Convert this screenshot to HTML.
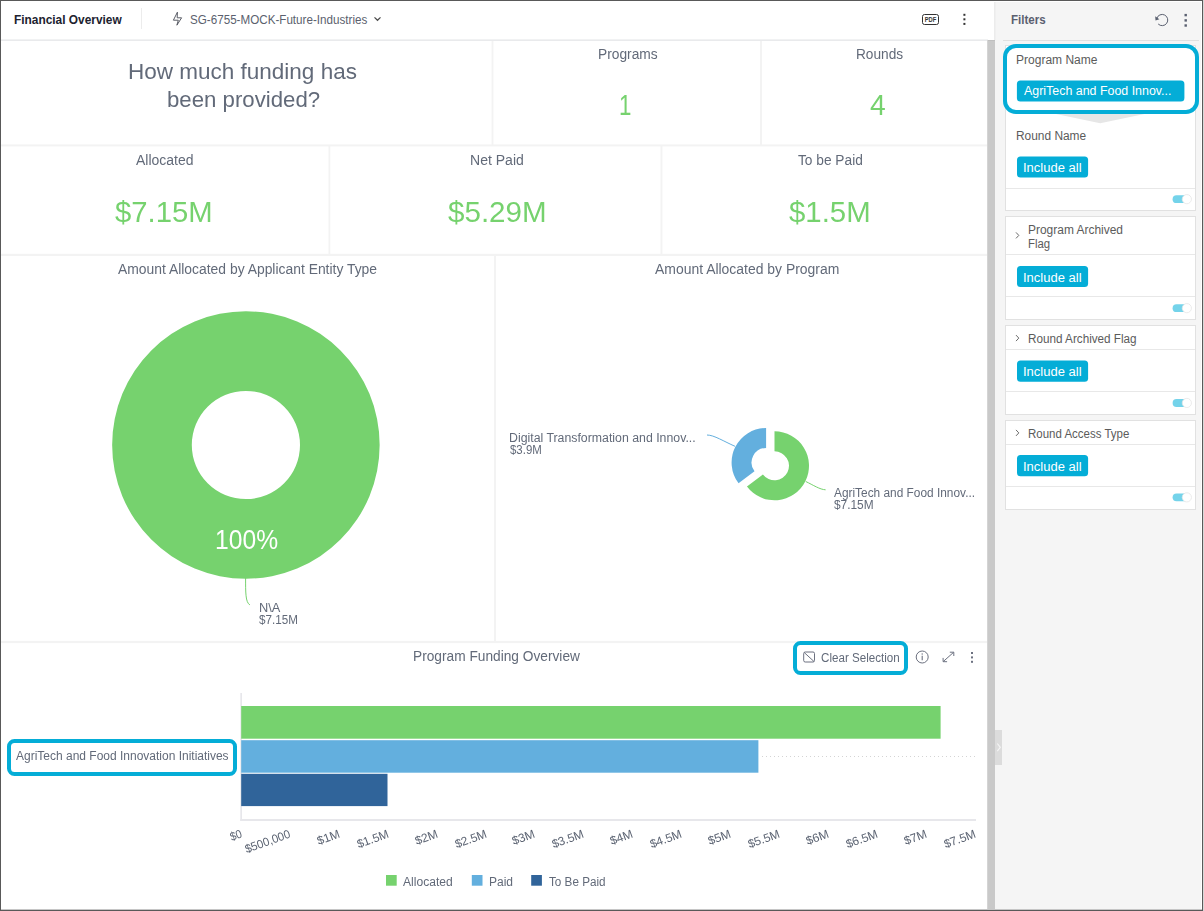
<!DOCTYPE html>
<html lang="en">
<head>
<meta charset="utf-8">
<title>Financial Overview</title>
<style>
*{box-sizing:border-box;margin:0;padding:0}
html,body{width:1204px;height:911px;overflow:hidden;background:#fff}
body{position:relative;font-family:"Liberation Sans",Arial,sans-serif;color:#5b6372}
.abs,.t,.ln,.card,.hl{position:absolute}
.t{white-space:nowrap;line-height:1;transform-origin:0 0;display:block}
.ln{background:#f1f1f2}
.frame{position:absolute;background:#595959;z-index:50}
#filters{position:absolute;left:995px;top:2px;width:206px;height:906.6px;background:#f5f5f5}
.card{background:#fff;border:1px solid #e1e1e1;left:1005px;width:191px}
.cdiv{position:absolute;left:1006px;width:189px;height:1px;background:#e8e8e8}
.hl{border:4px solid #04add7;background:transparent}
svg{position:absolute;left:0;top:0;overflow:visible}
</style>
</head>
<body>
<!-- header -->
<div class="abs" id="header" style="left:1px;top:1px;width:994px;height:38px;background:#fff"></div>
<div class="ln" style="left:1px;top:39px;width:987px;height:1px;background:#f1f2f3"></div>
<div class="ln" style="left:1px;top:40px;width:987px;height:1px;background:#e9eaec"></div>
<div class="ln" style="left:141px;top:8px;width:1px;height:21px;background:#ececec"></div>

<!-- dashboard grid lines: drawn in svg -->

<!-- scrollbar + splitter -->
<div class="abs" style="left:988px;top:40px;width:7px;height:870px;background:#c9c9c9"></div>
<div class="abs" style="left:987px;top:40px;width:1px;height:870px;background:#d4d4d4"></div>

<!-- filters panel -->
<div id="filters"></div>
<div class="abs" style="left:994px;top:2px;width:1px;height:38px;background:#ececec"></div>
<div class="abs" style="left:995px;top:2px;width:1px;height:38px;background:#f0f0f0"></div>
<div class="abs" style="left:988px;top:40px;width:7px;height:1px;background:#bfbfbf"></div>
<div class="abs" style="left:995px;top:730px;width:7px;height:35px;background:#dcdcdc"></div>
<div class="abs" style="left:1003px;top:40px;width:196px;height:1px;background:#e0e0e0"></div>

<div class="card" style="top:45px;height:166px"></div>
<div class="card" style="top:216px;height:104px"></div>
<div class="card" style="top:325px;height:90px"></div>
<div class="card" style="top:420px;height:90px"></div>
<div class="cdiv" style="top:188px"></div>
<div class="cdiv" style="top:254px"></div>
<div class="cdiv" style="top:296px"></div>
<div class="cdiv" style="top:349px"></div>
<div class="cdiv" style="top:391px"></div>
<div class="cdiv" style="top:444px"></div>
<div class="cdiv" style="top:486px"></div>



<!-- charts + icons -->
<svg width="1204" height="911" viewBox="0 0 1204 911">
<rect x="491.6" y="41" width="1.8" height="104" fill="#f3f3f3"/>
<rect x="760.0" y="41" width="2.0" height="104" fill="#f3f3f3"/>
<rect x="328.5" y="146" width="1.8" height="109" fill="#f3f3f3"/>
<rect x="660.5" y="146" width="1.9" height="109" fill="#f3f3f3"/>
<rect x="494.0" y="256" width="2.0" height="386" fill="#f3f3f3"/>
<rect x="1" y="144.4" width="986" height="2.0" fill="#f3f3f3"/>
<rect x="1" y="253.8" width="986" height="2.2" fill="#f3f3f3"/>
<rect x="1" y="640.9" width="986" height="2.2" fill="#f3f3f3"/>
<path fill-rule="evenodd" fill="#76d26e" d="M112.15 445.00a133.75 133.75 0 1 0 267.50 0a133.75 133.75 0 1 0 -267.50 0ZM191.80 445.00a54.10 54.10 0 1 0 108.20 0a54.10 54.10 0 1 0 -108.20 0Z"/>
<path d="M245.6 578C245.6 592 245.4 602.5 249.9 604.9" fill="none" stroke="#76d26e" stroke-width="1"/>
<path d="M774.50 431.30A34.50 34.50 0 1 1 746.95 486.56L762.92 474.53A14.50 14.50 0 1 0 774.50 451.30Z" fill="#76d26e"/>
<path d="M738.55 483.26A34.50 34.50 0 0 1 766.10 428.00L766.10 448.00A14.50 14.50 0 0 0 754.52 471.23Z" fill="#63afde"/>
<path d="M707 435C714 435 724 441.5 735 446.3" fill="none" stroke="#63afde" stroke-width="1"/>
<path d="M805.8 481.5C813 485 820 489.6 825.6 489.8" fill="none" stroke="#76d26e" stroke-width="1"/>
<rect x="240.3" y="693" width="1.7" height="128" fill="#e7e7eb"/>
<rect x="240.3" y="819" width="735.7" height="2" fill="#e7e7eb"/>
<rect x="241.2" y="706" width="699.4" height="32.7" fill="#76d26e"/>
<rect x="241.2" y="740.2" width="517.2" height="32.5" fill="#63afde"/>
<rect x="241.2" y="773.8" width="146.3" height="32.3" fill="#30649a"/>
<path d="M762 756.5H975" stroke="#d4d4d4" stroke-width="1" stroke-dasharray="1 3" fill="none"/>
<rect x="386" y="875" width="10.7" height="10.7" fill="#76d26e"/>
<rect x="471.8" y="875" width="10.7" height="10.7" fill="#63afde"/>
<rect x="531.2" y="875" width="10.7" height="10.7" fill="#30649a"/>
<path d="M1056 114H1144.5L1100.2 123.2Z" fill="#e6e6e6"/>
<rect x="1016.9" y="80.4" width="167.5" height="21.1" rx="3.5" fill="#04add7"/>
<rect x="1017" y="156.5" width="71.1" height="21.1" rx="3.5" fill="#04add7"/>
<rect x="1017" y="266.0" width="71.1" height="21.1" rx="3.5" fill="#04add7"/>
<rect x="1017" y="360.6" width="71.1" height="21.1" rx="3.5" fill="#04add7"/>
<rect x="1017" y="455.1" width="71.1" height="21.1" rx="3.5" fill="#04add7"/>
<rect x="1172.6" y="195.2" width="16" height="7.9" rx="3.95" fill="#74d3ea"/>
<circle cx="1186.85" cy="199.15" r="4.6" fill="#fff" stroke="#e6e6e6" stroke-width="0.8"/>
<rect x="1172.6" y="304.2" width="16" height="7.9" rx="3.95" fill="#74d3ea"/>
<circle cx="1186.85" cy="308.15" r="4.6" fill="#fff" stroke="#e6e6e6" stroke-width="0.8"/>
<rect x="1172.6" y="399.0" width="16" height="7.9" rx="3.95" fill="#74d3ea"/>
<circle cx="1186.85" cy="402.95" r="4.6" fill="#fff" stroke="#e6e6e6" stroke-width="0.8"/>
<rect x="1172.6" y="493.4" width="16" height="7.9" rx="3.95" fill="#74d3ea"/>
<circle cx="1186.85" cy="497.35" r="4.6" fill="#fff" stroke="#e6e6e6" stroke-width="0.8"/>
<path d="M177.4 12.2L173.4 20.2H178.3L176.9 25.2L181.6 17.8H177.2L177.4 12.2Z" fill="none" stroke="#4a4d57" stroke-width="0.9" stroke-linejoin="miter"/>
<path d="M374.5 17.4L377.5 20.3L380.5 17.4" fill="none" stroke="#4a4a4a" stroke-width="1.2"/>
<rect x="922.5" y="14.5" width="16" height="10" rx="2" fill="none" stroke="#333" stroke-width="1"/>
<text x="930.5" y="22" font-family="Liberation Sans, sans-serif" font-size="6.5" font-weight="700" fill="#333" text-anchor="middle" textLength="11.5" lengthAdjust="spacingAndGlyphs">PDF</text>
<rect x="963.4" y="13.8" width="2" height="2" fill="#333"/>
<rect x="963.4" y="18.3" width="2" height="2" fill="#333"/>
<rect x="963.4" y="22.9" width="2" height="2" fill="#333"/>
<path d="M1156.8 18.4A5.6 5.6 0 1 1 1158.2 24" fill="none" stroke="#5a6070" stroke-width="1"/>
<path d="M1155.2 16.2L1155.5 20.4L1159.4 19.2Z" fill="#5a6070"/>
<rect x="1184.5" y="13.9" width="2.4" height="2.4" fill="#5a6070"/>
<rect x="1184.5" y="19.2" width="2.4" height="2.4" fill="#5a6070"/>
<rect x="1184.5" y="24.3" width="2.4" height="2.4" fill="#5a6070"/>
<path d="M1016.0 232.4L1018.8 235.4L1016.0 238.4" fill="none" stroke="#6a6a6a" stroke-width="1"/>
<path d="M1016.0 335.1L1018.8 338.1L1016.0 341.1" fill="none" stroke="#6a6a6a" stroke-width="1"/>
<path d="M1016.0 429.9L1018.8 432.9L1016.0 435.9" fill="none" stroke="#6a6a6a" stroke-width="1"/>
<path d="M997.3 743.5L1000.3 747.3L997.3 751.1" fill="none" stroke="#f4f4f4" stroke-width="1.2"/>
<rect x="803.7" y="652" width="10.8" height="10" rx="1.5" fill="none" stroke="#6c7180" stroke-width="1"/>
<path d="M804.2 652.5L814 661.5" stroke="#6c7180" stroke-width="1" fill="none"/>
<circle cx="922.2" cy="657" r="6" fill="none" stroke="#6c7180" stroke-width="1"/>
<path d="M922.2 655.8V660.2" stroke="#6c7180" stroke-width="1.1"/><rect x="921.6" y="653.4" width="1.2" height="1.2" fill="#6c7180"/>
<path d="M943.2 661.6L953.6 652.3M949.8 652.2H953.8V656M943.1 657.9V661.7H947.1" fill="none" stroke="#6c7180" stroke-width="1"/>
<rect x="971" y="652.0" width="2" height="2" fill="#6c7180"/>
<rect x="971" y="656.4" width="2" height="2" fill="#6c7180"/>
<rect x="971" y="660.8" width="2" height="2" fill="#6c7180"/>
</svg>
<!-- annotation highlight boxes -->
<div class="hl" style="left:1003px;top:44px;width:195.5px;height:70px;border-radius:13px"></div>
<div class="hl" style="left:793px;top:641px;width:115px;height:34px;border-radius:7.5px"></div>
<div class="hl" style="left:7px;top:739px;width:230px;height:37px;border-radius:7.5px"></div>

<span class="t" style="left:14.00px;top:14px;font-size:12.42px;font-weight:700;color:#20222f;transform:scaleX(0.9579)">Financial Overview</span>
<span class="t" style="left:190.00px;top:14px;font-size:12.42px;color:#5b5f6e;transform:scaleX(0.9385)">SG-6755-MOCK-Future-Industries</span>
<span class="t" style="left:1010.70px;top:14px;font-size:12.42px;font-weight:700;color:#5b6070;transform:scaleX(0.9322)">Filters</span>
<span class="t" style="left:1015.73px;top:54px;font-size:12.42px;color:#5b5b5b;transform:scaleX(0.9686)">Program Name</span>
<span class="t" style="left:1024.30px;top:85px;font-size:12.42px;color:#ffffff;transform:scaleX(1.0006)">AgriTech and Food Innov...</span>
<span class="t" style="left:1015.74px;top:130px;font-size:12.42px;color:#5b5b5b;transform:scaleX(0.9598)">Round Name</span>
<span class="t" style="left:1023.25px;top:162px;font-size:12.42px;color:#ffffff;transform:scaleX(1.0479)">Include all</span>
<span class="t" style="left:1023.25px;top:272px;font-size:12.42px;color:#ffffff;transform:scaleX(1.0479)">Include all</span>
<span class="t" style="left:1023.25px;top:366px;font-size:12.42px;color:#ffffff;transform:scaleX(1.0479)">Include all</span>
<span class="t" style="left:1023.25px;top:461px;font-size:12.42px;color:#ffffff;transform:scaleX(1.0479)">Include all</span>
<span class="t" style="left:1027.94px;top:224px;font-size:12.42px;color:#5b5b5b;transform:scaleX(0.9635)">Program Archived</span>
<span class="t" style="left:1027.98px;top:238px;font-size:12.42px;color:#5b5b5b;transform:scaleX(0.9167)">Flag</span>
<span class="t" style="left:1027.96px;top:333px;font-size:12.42px;color:#5b5b5b;transform:scaleX(0.9430)">Round Archived Flag</span>
<span class="t" style="left:1027.97px;top:428px;font-size:12.42px;color:#5b5b5b;transform:scaleX(0.9257)">Round Access Type</span>
<div id="wtxt" style="position:absolute;left:0;top:0;width:988px;height:911px;will-change:transform">
<span class="t" style="left:127.67px;top:61px;font-size:21.73px;color:#626a79;transform:scaleX(1.0361)">How much funding has</span>
<span class="t" style="left:167.48px;top:89px;font-size:21.73px;color:#626a79;transform:scaleX(1.0225)">been provided?</span>
<span class="t" style="left:598.22px;top:47px;font-size:14.08px;color:#626a79;transform:scaleX(0.9786)">Programs</span>
<span class="t" style="left:618.96px;top:91px;font-size:28.98px;color:#76d26e;transform:scaleX(0.7692)">1</span>
<span class="t" style="left:855.53px;top:47px;font-size:14.08px;color:#626a79;transform:scaleX(0.9708)">Rounds</span>
<span class="t" style="left:870.00px;top:91px;font-size:28.98px;color:#76d26e;transform:scaleX(0.9750)">4</span>
<span class="t" style="left:135.75px;top:153px;font-size:14.08px;color:#626a79;transform:scaleX(0.9941)">Allocated</span>
<span class="t" style="left:114.50px;top:198px;font-size:28.98px;color:#76d26e;transform:scaleX(1.0107)">$7.15M</span>
<span class="t" style="left:470.00px;top:153px;font-size:14.08px;color:#626a79;transform:scaleX(0.9968)">Net Paid</span>
<span class="t" style="left:447.50px;top:198px;font-size:28.98px;color:#76d26e;transform:scaleX(1.0212)">$5.29M</span>
<span class="t" style="left:798.00px;top:153px;font-size:14.08px;color:#626a79;transform:scaleX(0.9742)">To be Paid</span>
<span class="t" style="left:788.50px;top:198px;font-size:28.98px;color:#76d26e;transform:scaleX(1.0143)">$1.5M</span>
<span class="t" style="left:117.50px;top:262px;font-size:14.08px;color:#626a79;transform:scaleX(0.9862)">Amount Allocated by Applicant Entity Type</span>
<span class="t" style="left:654.60px;top:262px;font-size:14.08px;color:#626a79;transform:scaleX(0.9899)">Amount Allocated by Program</span>
<span class="t" style="left:214.81px;top:526px;font-size:27.63px;color:#ffffff;transform:scaleX(0.8929)">100%</span>
<span class="t" style="left:259.30px;top:602px;font-size:12.01px;color:#626a79;transform:scaleX(1.0671)">N\A</span>
<span class="t" style="left:259.30px;top:614px;font-size:12.01px;color:#626a79;transform:scaleX(0.9718)">$7.15M</span>
<span class="t" style="left:509.00px;top:432px;font-size:12.01px;color:#626a79;transform:scaleX(1.0263)">Digital Transformation and Innov...</span>
<span class="t" style="left:509.50px;top:444px;font-size:12.01px;color:#626a79;transform:scaleX(0.9519)">$3.9M</span>
<span class="t" style="left:834.40px;top:487px;font-size:12.01px;color:#626a79;transform:scaleX(0.9895)">AgriTech and Food Innov...</span>
<span class="t" style="left:834.40px;top:499px;font-size:12.01px;color:#626a79;transform:scaleX(0.9893)">$7.15M</span>
<span class="t" style="left:412.78px;top:649px;font-size:14.08px;color:#626a79;transform:scaleX(0.9741)">Program Funding Overview</span>
<span class="t" style="left:821.30px;top:652px;font-size:12.21px;color:#626a79;transform:scaleX(0.9516)">Clear Selection</span>
<span class="t" style="left:15.50px;top:750px;font-size:12.21px;color:#626a79;transform:scaleX(0.9825)">AgriTech and Food Innovation Initiatives</span>
<span class="t" style="left:403.40px;top:876px;font-size:12.21px;color:#626a79;transform:scaleX(0.9896)">Allocated</span>
<span class="t" style="left:488.91px;top:876px;font-size:12.21px;color:#626a79;transform:scaleX(0.9851)">Paid</span>
<span class="t" style="left:548.70px;top:876px;font-size:12.21px;color:#626a79;transform:scaleX(0.9582)">To Be Paid</span>
<span class="t ax" style="left:229.69px;top:827.52px;font-size:11.90px;width:13.23px;transform-origin:100% 10.08px;transform:rotate(-20deg) scaleX(0.8909)">$0</span>
<span class="t ax" style="left:242.25px;top:827.52px;font-size:11.90px;width:49.59px;transform-origin:100% 10.08px;transform:rotate(-20deg) scaleX(0.9557)">$500,000</span>
<span class="t ax" style="left:317.64px;top:827.52px;font-size:11.90px;width:23.13px;transform-origin:100% 10.08px;transform:rotate(-20deg) scaleX(1.0128)">$1M</span>
<span class="t ax" style="left:356.66px;top:827.52px;font-size:11.90px;width:33.05px;transform-origin:100% 10.08px;transform:rotate(-20deg) scaleX(0.9998)">$1.5M</span>
<span class="t ax" style="left:415.51px;top:827.52px;font-size:11.90px;width:23.13px;transform-origin:100% 10.08px;transform:rotate(-20deg) scaleX(1.0128)">$2M</span>
<span class="t ax" style="left:454.52px;top:827.52px;font-size:11.90px;width:33.05px;transform-origin:100% 10.08px;transform:rotate(-20deg) scaleX(0.9998)">$2.5M</span>
<span class="t ax" style="left:513.37px;top:827.52px;font-size:11.90px;width:23.13px;transform-origin:100% 10.08px;transform:rotate(-20deg) scaleX(1.0128)">$3M</span>
<span class="t ax" style="left:552.39px;top:827.52px;font-size:11.90px;width:33.05px;transform-origin:100% 10.08px;transform:rotate(-20deg) scaleX(0.9998)">$3.5M</span>
<span class="t ax" style="left:611.24px;top:827.52px;font-size:11.90px;width:23.13px;transform-origin:100% 10.08px;transform:rotate(-20deg) scaleX(1.0128)">$4M</span>
<span class="t ax" style="left:650.26px;top:827.52px;font-size:11.90px;width:33.05px;transform-origin:100% 10.08px;transform:rotate(-20deg) scaleX(0.9998)">$4.5M</span>
<span class="t ax" style="left:709.11px;top:827.52px;font-size:11.90px;width:23.13px;transform-origin:100% 10.08px;transform:rotate(-20deg) scaleX(1.0128)">$5M</span>
<span class="t ax" style="left:748.12px;top:827.52px;font-size:11.90px;width:33.05px;transform-origin:100% 10.08px;transform:rotate(-20deg) scaleX(0.9998)">$5.5M</span>
<span class="t ax" style="left:806.97px;top:827.52px;font-size:11.90px;width:23.13px;transform-origin:100% 10.08px;transform:rotate(-20deg) scaleX(1.0128)">$6M</span>
<span class="t ax" style="left:845.99px;top:827.52px;font-size:11.90px;width:33.05px;transform-origin:100% 10.08px;transform:rotate(-20deg) scaleX(0.9998)">$6.5M</span>
<span class="t ax" style="left:904.84px;top:827.52px;font-size:11.90px;width:23.13px;transform-origin:100% 10.08px;transform:rotate(-20deg) scaleX(1.0128)">$7M</span>
<span class="t ax" style="left:943.86px;top:827.52px;font-size:11.90px;width:33.05px;transform-origin:100% 10.08px;transform:rotate(-20deg) scaleX(0.9998)">$7.5M</span>
</div>


<!-- frame -->
<div class="frame" style="left:0;top:0;width:1204px;height:1px"></div>
<div class="frame" style="left:0;top:0;width:1px;height:911px"></div>
<div class="frame" style="left:1202px;top:0;width:1px;height:911px"></div>
<div class="frame" style="left:1203px;top:0;width:1px;height:911px;background:#d8d8d8"></div>
<div class="frame" style="left:0;top:910px;width:1203px;height:1px"></div>
<div class="frame" style="left:1px;top:909px;width:1201px;height:1px;background:#c6c6c6"></div>
</body>
</html>
